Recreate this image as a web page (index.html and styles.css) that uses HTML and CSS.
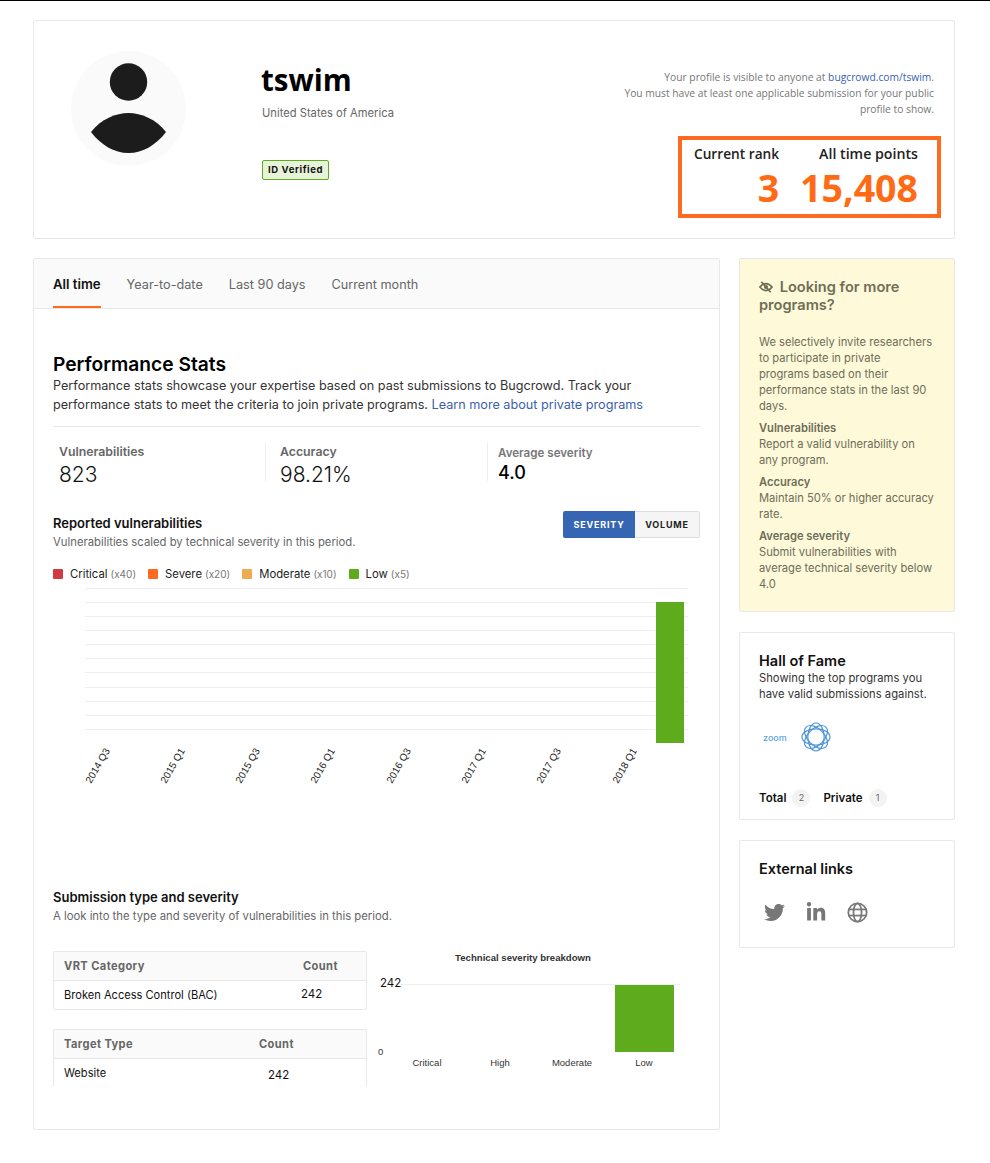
FILE: index.html
```html
<!DOCTYPE html>
<html lang="en">
<head>
  <meta charset="UTF-8">
  <meta name="viewport" content="width=device-width, initial-scale=1.0">
  <title>tswim - Bugcrowd</title>
  <link rel="stylesheet" href="styles.css">
</head>
<body>

  <div class="page">
    <div class="card profile">
      <svg class="avatar" viewBox="0 0 115 115" width="115" height="115">
        <circle cx="57.5" cy="57.5" r="57.5" fill="#fafafa"/>
        <circle cx="57.5" cy="31" r="18.7" fill="#1c1c1c"/>
        <path d="M20 81 C30 68 45 62 57.5 62 C70 62 85 68 95 81 C85 94 72 102 57.5 102 C43 102 30 94 20 81 Z" fill="#1c1c1c"/>
      </svg>
      <div class="profile-info">
        <h1>tswim</h1>
        <div class="country">United States of America</div>
        <span class="badge">ID Verified</span>
      </div>
      <div class="profile-right">
        <p class="visible-note">Your profile is visible to anyone at <a href="#">bugcrowd.com/tswim</a>.<br>You must have at least one applicable submission for your public profile to show.</p>
        <div class="rank-box">
          <div class="rank-col">
            <div class="rank-label">Current rank</div>
            <div class="rank-value">3</div>
          </div>
          <div class="rank-col">
            <div class="rank-label">All time points</div>
            <div class="rank-value">15,408</div>
          </div>
        </div>
      </div>
    </div>

    <div class="columns">
      <div class="card main">
        <div class="tabs">
          <a class="tab active" href="#">All time</a>
          <a class="tab" href="#">Year-to-date</a>
          <a class="tab" href="#">Last 90 days</a>
          <a class="tab" href="#">Current month</a>
        </div>
        <div class="main-body">
          <h2>Performance Stats</h2>
          <p class="intro">Performance stats showcase your expertise based on past submissions to Bugcrowd. Track your performance stats to meet the criteria to join private programs. <a href="#">Learn more about private programs</a></p>

          <div class="stats">
            <div class="stat">
              <div class="stat-label">Vulnerabilities</div>
              <div class="stat-value">823</div>
            </div>
            <div class="stat">
              <div class="stat-label">Accuracy</div>
              <div class="stat-value">98.21%</div>
            </div>
            <div class="stat stat-alt">
              <div class="stat-label">Average severity</div>
              <div class="stat-value">4.0</div>
            </div>
          </div>

          <div class="section-head">
            <div>
              <h3>Reported vulnerabilities</h3>
              <p class="sub">Vulnerabilities scaled by technical severity in this period.</p>
            </div>
            <div class="toggle">
              <button class="toggle-btn on">SEVERITY</button>
              <button class="toggle-btn">VOLUME</button>
            </div>
          </div>

          <div class="legend">
            <span class="legend-item"><i class="swatch critical"></i>Critical <small>(x40)</small></span>
            <span class="legend-item"><i class="swatch severe"></i>Severe <small>(x20)</small></span>
            <span class="legend-item"><i class="swatch moderate"></i>Moderate <small>(x10)</small></span>
            <span class="legend-item"><i class="swatch low"></i>Low <small>(x5)</small></span>
          </div>

          <svg class="chart-vuln" width="647" height="204" viewBox="0 0 647 204">
            <g stroke="#eeeeee" stroke-width="1">
              <line x1="32" x2="635" y1="0.5" y2="0.5"/>
              <line x1="32" x2="635" y1="14.5" y2="14.5"/>
              <line x1="32" x2="635" y1="28.5" y2="28.5"/>
              <line x1="32" x2="635" y1="42.5" y2="42.5"/>
              <line x1="32" x2="635" y1="56.5" y2="56.5"/>
              <line x1="32" x2="635" y1="70.5" y2="70.5"/>
              <line x1="32" x2="635" y1="84.5" y2="84.5"/>
              <line x1="32" x2="635" y1="99.5" y2="99.5"/>
              <line x1="32" x2="635" y1="113.5" y2="113.5"/>
              <line x1="32" x2="635" y1="127.5" y2="127.5"/>
              <line x1="32" x2="635" y1="141.5" y2="141.5"/>
            </g>
            <rect x="603" y="14" width="28" height="141" fill="#5fab1e"/>
            <g class="axis-label">
              <text transform="translate(38 196) rotate(-60)">2014 Q3</text>
              <text transform="translate(113 196) rotate(-60)">2015 Q1</text>
              <text transform="translate(188 196) rotate(-60)">2015 Q3</text>
              <text transform="translate(263 196) rotate(-60)">2016 Q1</text>
              <text transform="translate(339 196) rotate(-60)">2016 Q3</text>
              <text transform="translate(414 196) rotate(-60)">2017 Q1</text>
              <text transform="translate(489 196) rotate(-60)">2017 Q3</text>
              <text transform="translate(565 196) rotate(-60)">2018 Q1</text>
            </g>
          </svg>

          <h3 class="submission-title">Submission type and severity</h3>
          <p class="sub">A look into the type and severity of vulnerabilities in this period.</p>

          <div class="breakdown">
            <div class="tables">
              <div class="mini-table">
                <div class="mini-head vrt"><span>VRT Category</span><span>Count</span></div>
                <div class="mini-row vrt"><span>Broken Access Control (BAC)</span><span class="num">242</span></div>
              </div>
              <div class="mini-table clipped">
                <div class="mini-head target"><span>Target Type</span><span>Count</span></div>
                <div class="mini-row target"><span>Website</span><span class="num">242</span></div>
              </div>
            </div>
            <svg class="chart-tech" width="333" height="135" viewBox="0 0 333 135">
              <text class="chart-title" x="156" y="11" text-anchor="middle">Technical severity breakdown</text>
              <line x1="33" x2="313" y1="34.5" y2="34.5" stroke="#eeeeee"/>
              <rect x="248" y="35" width="59" height="67" fill="#5fab1e"/>
              <text class="tick-big" x="13" y="37">242</text>
              <text class="tick" x="11" y="105">0</text>
              <g class="tick" text-anchor="middle">
                <text x="60" y="116">Critical</text>
                <text x="133" y="116">High</text>
                <text x="205" y="116">Moderate</text>
                <text x="277" y="116">Low</text>
              </g>
            </svg>
          </div>
        </div>
      </div>

      <div class="side">
        <div class="card notice">
          <h4>
            <svg class="eye-icon" viewBox="0 0 24 24" width="14" height="14">
              <path d="M1.5 12 Q12 0 22.5 12 Q12 24 1.5 12 Z" fill="none" stroke="#6f6f55" stroke-width="3"/>
              <circle cx="12" cy="12" r="3.5" fill="#6f6f55"/>
              <line x1="4" y1="3" x2="20" y2="21" stroke="#6f6f55" stroke-width="3"/>
            </svg>
            Looking for more programs?
          </h4>
          <p class="notice-lead">We selectively invite researchers to participate in private programs based on their performance stats in the last 90 days.</p>
          <p><b>Vulnerabilities</b><br>Report a valid vulnerability on any program.</p>
          <p><b>Accuracy</b><br>Maintain 50% or higher accuracy rate.</p>
          <p><b>Average severity</b><br>Submit vulnerabilities with average technical severity below 4.0</p>
        </div>

        <div class="card fame">
          <h5>Hall of Fame</h5>
          <p class="fame-sub">Showing the top programs you have valid submissions against.</p>
          <div class="fame-logos">
            <span class="zoom-logo">zoom</span>
            <svg viewBox="0 0 30 30" width="30" height="30" fill="none" stroke="#4f97d8" stroke-width="1.2">
              <ellipse cx="15" cy="15" rx="14" ry="8.2"/>
              <ellipse cx="15" cy="15" rx="14" ry="8.2" transform="rotate(45 15 15)"/>
              <ellipse cx="15" cy="15" rx="14" ry="8.2" transform="rotate(90 15 15)"/>
              <ellipse cx="15" cy="15" rx="14" ry="8.2" transform="rotate(135 15 15)"/>
            </svg>
          </div>
          <div class="fame-counts">
            <b>Total</b><span class="pill">2</span>
            <b>Private</b><span class="pill">1</span>
          </div>
        </div>

        <div class="card links">
          <h5>External links</h5>
          <div class="link-icons">
            <svg viewBox="0 0 512 512" width="21" height="21" fill="#777777"><path d="M459.37 151.716c.325 4.548.325 9.097.325 13.645 0 138.72-105.583 298.558-298.558 298.558-59.452 0-114.68-17.219-161.137-47.106 8.447.974 16.568 1.299 25.34 1.299 49.055 0 94.213-16.568 130.274-44.832-46.132-.975-84.792-31.188-98.112-72.772 6.498.974 12.995 1.624 19.818 1.624 9.421 0 18.843-1.3 27.614-3.573-48.081-9.747-84.143-51.98-84.143-102.985v-1.299c13.969 7.797 30.214 12.67 47.431 13.319-28.264-18.843-46.781-51.005-46.781-87.391 0-19.492 5.197-37.36 14.294-52.954 51.655 63.675 129.3 105.258 216.365 109.807-1.624-7.797-2.599-15.918-2.599-24.04 0-57.828 46.782-104.934 104.934-104.934 30.213 0 57.502 12.67 76.67 33.137 23.715-4.548 46.456-13.645 66.599-25.665-7.798 24.366-24.366 44.833-46.132 57.827 21.117-2.273 41.584-8.122 60.426-16.243-14.292 20.791-32.161 39.308-52.628 54.253z"/></svg>
            <svg viewBox="0 0 448 512" width="20" height="21" fill="#777777"><path d="M100.28 448H7.4V148.9h92.88zM53.79 108.1C24.09 108.1 0 83.5 0 53.8a53.79 53.79 0 0 1 107.58 0c0 29.7-24.1 54.3-53.79 54.3zM447.9 448h-92.68V302.4c0-34.7-.7-79.2-48.29-79.2-48.29 0-55.69 37.7-55.69 76.7V448h-92.78V148.9h89.08v40.8h1.3c12.4-23.5 42.69-48.3 87.88-48.3 94 0 111.28 61.9 111.28 142.3V448z"/></svg>
            <svg viewBox="0 0 24 24" width="21" height="21" fill="none" stroke="#777777" stroke-width="2">
              <circle cx="12" cy="12" r="10.5"/>
              <ellipse cx="12" cy="12" rx="4.6" ry="10.5"/>
              <line x1="1.5" x2="22.5" y1="8.5" y2="8.5"/>
              <line x1="1.5" x2="22.5" y1="15.5" y2="15.5"/>
            </svg>
          </div>
        </div>
      </div>
    </div>
  </div>

</body>
</html>
```

FILE: styles.css
```css
body { font-family: Inter, "Liberation Sans", sans-serif; background-color: #fff; color: #111; margin: 0; padding: 0; }
a { color: #3b5fad; text-decoration: none; }
p { margin: 0; }

.page { border-top: 1px solid #000; padding: 19px 35px 33px 33px; }
.card { border: 1px solid #e8e8e8; border-radius: 2px; background-color: #fff; box-sizing: border-box; }

.profile { height: 219px; display: flex; padding: 30px 20px 0 37px; }
.avatar { flex: none; }
.profile-info { margin-left: 75px; flex: 1; }
.profile-info h1 { font-family: "Open Sans", sans-serif; font-size: 29.5px; font-weight: 700; line-height: 44px; margin: 7px 0 0; color: #000; }
.country { font-size: 11.2px; color: #666; line-height: 16px; margin-top: 3px; padding-left: 1px; }
.badge { display: inline-block; margin-top: 39px; margin-left: 1px; border: 1px solid #5fab1e; border-radius: 2px; background-color: #e7f3d9; font-size: 9.5px; font-weight: 700; letter-spacing: 0.6px; line-height: 18px; padding: 0 5px; color: #111; }

.profile-right { width: 312px; flex: none; text-align: right; }
.visible-note { font-family: "Open Sans", sans-serif; font-size: 10.25px; line-height: 16px; color: #777; margin-top: 18px; }
.rank-box { display: flex; justify-content: space-between; box-sizing: border-box; width: 263px; height: 82px; margin: 19px -7px 0 auto; border: 4px solid #ff6a20; padding: 4px 19px 0 12px; font-family: "Open Sans", sans-serif; }
.rank-label { font-size: 13.7px; font-weight: 600; line-height: 20px; color: #222; }
.rank-col + .rank-col .rank-label { font-size: 14.2px; }
.rank-value { font-size: 37.5px; font-weight: 700; line-height: 47px; color: #ff6a14; }

.columns { display: flex; justify-content: space-between; align-items: flex-start; margin-top: 19px; }

.main { width: 687px; height: 872px; }
.tabs { display: flex; gap: 26px; height: 50px; box-sizing: border-box; padding: 0 19px; background-color: #fafafa; border-bottom: 1px solid #e8e8e8; }
.tab { font-size: 12.7px; line-height: 51px; height: 49px; box-sizing: border-box; color: #666; }
.tab.active { font-size: 13.2px; line-height: 50px; color: #111; font-weight: 600; border-bottom: 2px solid #ff6a20; }

.main-body { padding: 0 19px 0 19px; }
h2 { font-size: 19.2px; font-weight: 600; line-height: 24px; margin: 43px 0 0; color: #000; }
.intro { font-size: 12.65px; line-height: 19px; color: #333; margin-top: 0; padding-bottom: 12px; border-bottom: 1px solid #e8e8e8; }

.stats { display: flex; margin-top: 16px; height: 38px; }
.stat { flex: none; width: 222px; padding-left: 14px; box-sizing: border-box; border-left: 1px solid #eee; }
.stat:first-child { width: 212px; padding-left: 6px; border-left: none; }
.stat-label { font-size: 12.3px; font-weight: 600; line-height: 18px; color: #666; }
.stat-value { font-size: 21px; font-weight: 300; line-height: 28px; color: #111; }
.stat-alt { flex: 1; width: auto; padding-left: 10px; }
.stat-alt .stat-label { font-size: 11.6px; line-height: 20px; color: #777; }
.stat-alt .stat-value { font-size: 18px; font-weight: 500; line-height: 20px; color: #000; }

.section-head { display: flex; justify-content: space-between; margin-top: 32px; }
h3 { font-size: 13px; font-weight: 600; line-height: 20px; margin: 0; color: #111; }
.sub { font-size: 11.3px; line-height: 16px; color: #666; margin-top: 1px; }
.toggle { display: flex; height: 27px; margin-top: -2px; }
.toggle-btn { font-family: Inter, sans-serif; font-size: 9px; font-weight: 700; letter-spacing: 0.8px; border: 1px solid #ddd; border-left: none; background-color: #f5f5f5; color: #222; padding: 0; width: 65px; border-radius: 0 2px 2px 0; }
.toggle-btn.on { width: 72px; background-color: #3665b3; border: none; color: #fff; border-radius: 2px 0 0 2px; }

.legend { display: flex; gap: 12px; margin-top: 16px; font-size: 11.3px; line-height: 16px; color: #222; }
.legend-item { display: flex; align-items: center; }
.legend-item small { font-size: 10px; color: #777; margin-left: 3px; }
.swatch { width: 10px; height: 10px; border-radius: 1px; margin-right: 7px; }
.critical { background-color: #d13a3f; }
.severe { background-color: #ff6a20; }
.moderate { background-color: #edab52; }
.low { background-color: #5fab1e; }

.chart-vuln { display: block; margin-top: 6px; }
.axis-label text { font-family: "Liberation Sans", sans-serif; font-size: 10px; fill: #222; }

.submission-title { margin-top: 95px; }
.breakdown { display: flex; justify-content: space-between; margin-top: 27px; }
.tables { width: 314px; }
.mini-table { border: 1px solid #e8e8e8; border-radius: 2px; font-size: 11.1px; }
.mini-table + .mini-table { margin-top: 19px; }
.mini-table.clipped { height: 57px; border-bottom: none; overflow: hidden; }
.mini-head { display: grid; height: 29px; line-height: 28px; box-sizing: border-box; padding-left: 10px; background-color: #fafafa; border-bottom: 1px solid #e8e8e8; font-weight: 700; letter-spacing: 0.4px; color: #666; }
.mini-row { display: grid; padding-left: 10px; line-height: 28px; color: #111; }
.vrt { grid-template-columns: 239px auto; }
.target { grid-template-columns: 195px auto; }
.mini-row .num { font-size: 11.5px; margin-left: -2px; margin-top: -1px; }
.mini-row.target .num { margin-left: 9px; margin-top: 2px; }
.mini-row.target { line-height: 29px; }
.chart-tech { display: block; margin-top: -1px; }
.chart-title { font-family: "Liberation Sans", sans-serif; font-size: 9.6px; font-weight: 700; fill: #333; }
.tick { font-family: "Liberation Sans", sans-serif; font-size: 9.5px; fill: #333; }
.tick-big { font-family: Inter, sans-serif; font-size: 11.5px; fill: #111; }

.side { width: 216px; }
.side h5 { font-size: 14.5px; font-weight: 600; line-height: 18px; margin: 0; color: #111; }

.notice { height: 354px; padding: 19px 20px 0 19px; background-color: #fdf9d9; font-size: 11.15px; line-height: 16px; color: #6d6d58; }
.notice h4 { font-size: 14.6px; font-weight: 600; line-height: 18px; margin: 0; color: #6f6f55; }
.eye-icon { vertical-align: -2px; margin-right: 3px; }
.notice p { margin-top: 6px; }
.notice .notice-lead { margin-top: 20px; }
.notice b { font-weight: 600; }

.fame { height: 188px; margin-top: 20px; padding: 19px 19px 0; }
.fame-sub { font-size: 11.25px; line-height: 16px; color: #333; }
.fame-logos { display: flex; align-items: center; gap: 14px; margin-top: 20px; height: 30px; padding-left: 4px; }
.zoom-logo { font-size: 9px; font-weight: 500; color: #5aa5e8; }
.fame-counts { display: flex; align-items: center; margin-top: 37px; font-size: 11.5px; }
.fame-counts b { font-weight: 600; }
.pill { width: 18px; height: 18px; border-radius: 9px; background-color: #f3f3f3; color: #666; font-size: 9px; text-align: center; line-height: 18px; margin: 0 13px 0 6px; }

.links { height: 108px; margin-top: 20px; padding: 19px 19px 0; }
.link-icons { display: flex; align-items: center; gap: 21px; margin-top: 24px; padding-left: 5px; }
```
